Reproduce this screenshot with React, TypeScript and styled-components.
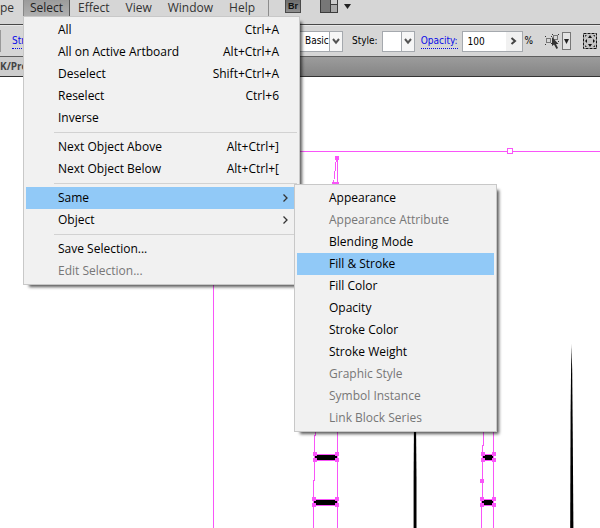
import React from "react";
import styled, { createGlobalStyle, css } from "styled-components";

const uiFont = '"Open Sans", "Noto Sans", sans-serif';
const panelFont = '"DejaVu Sans Condensed", "DejaVu Sans", sans-serif';
const highlight = "#91c9f7";
const magenta = "#f955f9";

const GlobalStyle = createGlobalStyle`
  *, *::before, *::after { box-sizing: border-box; }
  body { margin: 0; overflow: hidden; background: #fff; }
  button, input, select { font: inherit; color: inherit; margin: 0; }
  ul { list-style: none; margin: 0; padding: 0; }
`;

const Window = styled.div`
  display: flex;
  flex-direction: column;
  min-height: 100vh;
  font: 12px/16px ${uiFont};
  color: #000;
`;

const MenuBar = styled.nav`
  display: flex;
  align-items: flex-start;
  height: 25px;
  background: #d6d6d6;
  border-bottom: 1px solid #484848;
`;

const MenuTitle = styled.button<{ $open?: boolean; $clipped?: boolean }>`
  height: 16px;
  padding: ${(p) => (p.$clipped ? "0" : "0 8px")};
  border: 0;
  background: none;
  line-height: 16px;
  color: #333;
  white-space: nowrap;
  ${(p) =>
    p.$clipped &&
    css`
      width: 23px;
      text-align: left;
    `}
  ${(p) =>
    p.$open &&
    css`
      width: 47px;
      padding: 0 6px;
      background: linear-gradient(#9b9b9b, #b0b0b0);
      border-left: 1px solid #888;
      border-right: 1px solid #555;
      color: #222;
    `}
`;

const MenuAnchor = styled.div`
  position: relative;
`;

const BarTools = styled.div`
  display: flex;
  align-items: flex-start;
  height: 16px;
  margin-left: 5px;
  padding-left: 16px;
  border-left: 1px solid #8c8c8c;
  gap: 19px;
`;

const BridgeButton = styled.button`
  width: 16px;
  height: 13px;
  padding: 0;
  border: 1px solid #4a4a4a;
  border-top: 0;
  background: linear-gradient(#6d6d6d, #8e8e8e);
  font: bold 9px/11px "Liberation Sans", sans-serif;
  color: #111;
`;

const IconButton = styled.button`
  display: flex;
  flex: none;
  padding: 0;
  border: 0;
  background: none;
`;

const MenuPanel = styled.ul<{ $sub?: boolean }>`
  position: absolute;
  z-index: ${(p) => (p.$sub ? 2 : 1)};
  top: ${(p) => (p.$sub ? "-3px" : "100%")};
  left: ${(p) => (p.$sub ? "calc(100% - 3px)" : "0")};
  width: ${(p) => (p.$sub ? "203px" : "277px")};
  padding: 2px;
  background: #f1f1f1;
  border: 1px solid #c8c8c8;
  box-shadow: 4px 4px 3px -2px rgba(0, 0, 0, 0.65);
`;

const MenuRow = styled.li`
  position: relative;
`;

const MenuItem = styled.button<{ $active?: boolean }>`
  display: flex;
  align-items: center;
  justify-content: space-between;
  width: 100%;
  height: 22px;
  padding: 0 18px 0 32px;
  border: 0;
  background: ${(p) => (p.$active ? highlight : "none")};
  line-height: 22px;
  text-align: left;
  white-space: nowrap;
  &:disabled {
    color: #777;
  }
`;

const Shortcut = styled.span`
  text-align: right;
`;

const Arrow = styled.svg`
  margin-right: -9px;
`;

const Divider = styled.li`
  height: 1px;
  margin: 3px 0 3px 28px;
  background: #d2d2d2;
`;

const OptionsBar = styled.div`
  display: flex;
  align-items: center;
  height: 32px;
  background: #d6d6d6;
  border-top: 1px solid #e8e8e8;
  border-bottom: 1px solid #5e5e5e;
  font: 10px/16px ${panelFont};
  overflow: hidden;
`;

const StrokeGroup = styled.div`
  flex: 0 0 292px;
  display: flex;
  align-items: center;
  height: 22px;
  padding-left: 11px;
  border-left: 1px solid #999;
`;

const PanelLink = styled.a`
  color: #0a0ae6;
  line-height: 14px;
  text-decoration: none;
  border-bottom: 1px dotted #0a0ae6;
`;

const Field = styled.div<{ $width: number }>`
  display: flex;
  align-items: center;
  flex: none;
  width: ${(p) => p.$width}px;
  height: 21px;
  background: #fff;
  border: 1px solid #a5a9ae;
`;

const Select = styled.select`
  appearance: none;
  flex: 1;
  min-width: 0;
  height: 100%;
  padding: 0 0 0 12px;
  border: 0;
  background: transparent;
`;

const DropMark = styled.span`
  display: flex;
  align-items: center;
  justify-content: center;
  width: 13px;
  height: 100%;
  border-left: 1px solid #a5a9ae;
  background: #f6f6f6;
  pointer-events: none;
`;

const StyleLabel = styled.label`
  margin: 0 4px 0 9px;
`;

const OpacityGroup = styled.div`
  display: flex;
  align-items: center;
  gap: 4px;
  margin-left: 6px;
`;

const NumberInput = styled.input`
  flex: 1;
  min-width: 0;
  height: 100%;
  padding: 0 0 0 5px;
  border: 0;
  background: transparent;
`;

const StepButton = styled.button`
  display: flex;
  align-items: center;
  justify-content: center;
  width: 16px;
  height: 100%;
  padding: 0;
  border: 0;
  background: #f1f1f1;
`;

const Unit = styled.span`
  margin-left: -2px;
`;

const SelectTools = styled.div`
  display: flex;
  align-items: center;
  gap: 2px;
  margin: 0 12px;
`;

const SmallDrop = styled.button`
  display: flex;
  align-items: center;
  justify-content: center;
  width: 9px;
  height: 18px;
  padding: 0;
  border: 1px solid #777;
  background: #e4e4e4;
`;

const TabStrip = styled.div`
  display: flex;
  height: 20px;
  background: linear-gradient(#9c9c9c, #858585);
  border-bottom: 1px solid #333;
`;

const DocumentTab = styled.button`
  padding: 0 8px 0 0;
  border: 0;
  background: #cdcdcd;
  font: bold 10px/19px ${uiFont};
  color: #444;
`;

const Canvas = styled.main`
  flex: 1;
  display: flex;
  background: #fff;
  overflow: hidden;
`;

const Artwork = styled.svg`
  flex: 1;
  min-width: 0;
`;

function DownChevron() {
  return (
    <svg width="8" height="7" viewBox="0 0 8 7" aria-hidden="true">
      <path d="M1 1 L4 4.6 L7 1" fill="none" stroke="#555" strokeWidth="2" />
    </svg>
  );
}

type Entry = {
  label: string;
  keys?: string;
  disabled?: boolean;
  active?: boolean;
  submenu?: boolean;
  children?: Entry[];
};

const sameEntries: Entry[] = [
  { label: "Appearance" },
  { label: "Appearance Attribute", disabled: true },
  { label: "Blending Mode" },
  { label: "Fill & Stroke", active: true },
  { label: "Fill Color" },
  { label: "Opacity" },
  { label: "Stroke Color" },
  { label: "Stroke Weight" },
  { label: "Graphic Style", disabled: true },
  { label: "Symbol Instance", disabled: true },
  { label: "Link Block Series", disabled: true },
];

const selectEntries: (Entry | null)[] = [
  { label: "All", keys: "Ctrl+A" },
  { label: "All on Active Artboard", keys: "Alt+Ctrl+A" },
  { label: "Deselect", keys: "Shift+Ctrl+A" },
  { label: "Reselect", keys: "Ctrl+6" },
  { label: "Inverse" },
  null,
  { label: "Next Object Above", keys: "Alt+Ctrl+]" },
  { label: "Next Object Below", keys: "Alt+Ctrl+[" },
  null,
  { label: "Same", active: true, submenu: true, children: sameEntries },
  { label: "Object", submenu: true },
  null,
  { label: "Save Selection..." },
  { label: "Edit Selection...", disabled: true },
];

function Menu({ entries, sub }: { entries: (Entry | null)[]; sub?: boolean }) {
  return (
    <MenuPanel $sub={sub} role="menu">
      {entries.map((entry, i) =>
        entry === null ? (
          <Divider key={i} role="separator" />
        ) : (
          <MenuRow key={entry.label} role="none">
            <MenuItem role="menuitem" $active={entry.active} disabled={entry.disabled}>
              {entry.label}
              {entry.keys && <Shortcut>{entry.keys}</Shortcut>}
              {entry.submenu && (
                <Arrow width="6" height="10" viewBox="0 0 6 10" aria-hidden="true">
                  <path d="M1.5 1.5 L5 5 L1.5 8.5" fill="none" stroke="#333" strokeWidth="1.3" />
                </Arrow>
              )}
            </MenuItem>
            {entry.children && <Menu entries={entry.children} sub />}
          </MenuRow>
        )
      )}
    </MenuPanel>
  );
}

const anchors: [number, number][] = [
  [337, 158], [334, 184], [337, 184],
  [315, 454], [337, 454], [315, 460], [337, 460],
  [314, 499], [337, 499], [314, 505], [337, 505],
  [483, 454], [494, 454], [483, 460], [494, 460],
  [482, 481],
  [482, 499], [494, 499], [482, 505], [494, 505],
];

function Drawing() {
  return (
    <Artwork role="img" aria-label="Selected artwork">
      {/* Shapes are in window coordinates; the canvas begins below the 77px of bars. */}
      <g transform="translate(0 -77)">
        <g fill="#000">
          <rect x="315" y="455" width="22" height="5" rx="1" />
          <rect x="314" y="500" width="23" height="5" rx="1" />
          <rect x="483" y="455" width="11" height="5" rx="1" />
          <rect x="482" y="500" width="12" height="5" rx="1" />
          <path d="M414 420 H416 L416.5 480 V2000 H413.6 V480 Z" />
          <path d="M571.4 344 L572.2 370 L572.8 440 L573.4 528 V2000 H570.2 V528 L570.6 410 Z" />
        </g>
        <g stroke={magenta} fill="none" strokeWidth="1" shapeRendering="crispEdges">
          <path d="M213.5 2000 V151.5 H4000" />
          <path d="M337.5 158 V2000" />
          <path d="M336.5 158 L333.5 184 H337" />
          <path d="M315.5 430 V435 L314.5 436 V480 L313.5 481 V2000" />
          <path d="M314 454.5 H337 M314 460.5 H337 M313 499.5 H337 M313 505.5 H337" />
          <path d="M483.5 430 V445 L482.5 446 V500 L481.5 501 V2000" />
          <path d="M493.5 430 V2000" />
          <path d="M483 454.5 H494 M483 460.5 H494 M482 499.5 H494 M482 505.5 H494" />
        </g>
        <g fill={magenta}>
          {anchors.map(([x, y]) => (
            <rect key={`${x}-${y}`} x={x - 2} y={y - 2} width="4" height="4" />
          ))}
        </g>
        <rect x="507.5" y="148.5" width="5" height="5" fill="#fff" stroke={magenta} />
      </g>
    </Artwork>
  );
}

export default function App() {
  return (
    <Window>
      <GlobalStyle />
      <MenuBar aria-label="Main menu">
        <MenuTitle $clipped>pe</MenuTitle>
        <MenuAnchor>
          <MenuTitle $open aria-haspopup="menu" aria-expanded="true">
            Select
          </MenuTitle>
          <Menu entries={selectEntries} />
        </MenuAnchor>
        <MenuTitle>Effect</MenuTitle>
        <MenuTitle>View</MenuTitle>
        <MenuTitle>Window</MenuTitle>
        <MenuTitle>Help</MenuTitle>
        <BarTools>
          <BridgeButton>Br</BridgeButton>
          <IconButton aria-label="Arrange documents">
            <svg width="32" height="13" viewBox="0 0 32 13">
              <rect width="18" height="13" fill="#3c3c3c" />
              <rect x="1" width="9" height="12" fill="#777" />
              <rect x="11" width="6" height="4" fill="#ccc" />
              <rect x="11" y="5" width="6" height="7" fill="#aaa" />
              <path d="M24 4 H31 L27.5 9 Z" fill="#222" />
            </svg>
          </IconButton>
        </BarTools>
      </MenuBar>

      <OptionsBar>
        <StrokeGroup>
          <PanelLink href="#stroke">Stroke:</PanelLink>
        </StrokeGroup>
        <Field $width={51}>
          <Select aria-label="Brush definition" defaultValue="Basic">
            <option>Basic</option>
          </Select>
          <DropMark>
            <DownChevron />
          </DropMark>
        </Field>
        <StyleLabel htmlFor="style">Style:</StyleLabel>
        <Field $width={33}>
          <Select id="style" defaultValue="">
            <option value=""></option>
          </Select>
          <DropMark>
            <DownChevron />
          </DropMark>
        </Field>
        <OpacityGroup>
          <PanelLink href="#opacity">Opacity:</PanelLink>
          <Field $width={61}>
            <NumberInput aria-label="Opacity" defaultValue="100" />
            <StepButton aria-label="Opacity slider">
              <svg width="7" height="8" viewBox="0 0 7 8">
                <path d="M1.5 1 L5 4 L1.5 7" fill="none" stroke="#444" strokeWidth="2" />
              </svg>
            </StepButton>
          </Field>
          <Unit>%</Unit>
        </OpacityGroup>
        <SelectTools>
          <IconButton aria-label="Select similar objects">
            <svg width="15" height="18" viewBox="0 0 15 18">
              <g fill="none" stroke="#777">
                <rect x="1.5" y="6.5" width="4" height="4" />
                <rect x="8.5" y="3.5" width="4" height="4" />
              </g>
              <g fill="#333">
                <path d="M0 4h1v1h-1z M6 4h1v1h-1z M0 12h1v1h-1z M6 11h1v1h-1z M7 2h1v1h-1z M13 2h1v1h-1z M13 9h1v1h-1z" />
                <path d="M7 5 V14 L9 12.5 L11.5 17 L13 16 L11 12 H13.5 Z" />
              </g>
            </svg>
          </IconButton>
          <SmallDrop aria-label="Similar options">
            <svg width="5" height="5" viewBox="0 0 5 5">
              <path d="M0 0 H5 L2.5 5 Z" fill="#222" />
            </svg>
          </SmallDrop>
        </SelectTools>
        <IconButton aria-label="Isolate selected object">
          <svg width="14" height="16" viewBox="0 0 14 16">
            <rect x="0.5" y="0.5" width="13" height="15" fill="#c4c4c4" stroke="#111" strokeDasharray="3 1" />
            <path d="M7 2 L9 5 H5 Z M7 14 L9 11 H5 Z M2 8 L4 6 V10 Z M12 8 L10 6 V10 Z" fill="#111" />
            <path d="M2 2 H4 L2 4 Z M12 2 H10 L12 4 Z M2 14 H4 L2 12 Z M12 14 H10 L12 12 Z" fill="#333" />
          </svg>
        </IconButton>
      </OptionsBar>

      <TabStrip>
        <DocumentTab>K/Preview)</DocumentTab>
      </TabStrip>

      <Canvas>
        <Drawing />
      </Canvas>
    </Window>
  );
}
